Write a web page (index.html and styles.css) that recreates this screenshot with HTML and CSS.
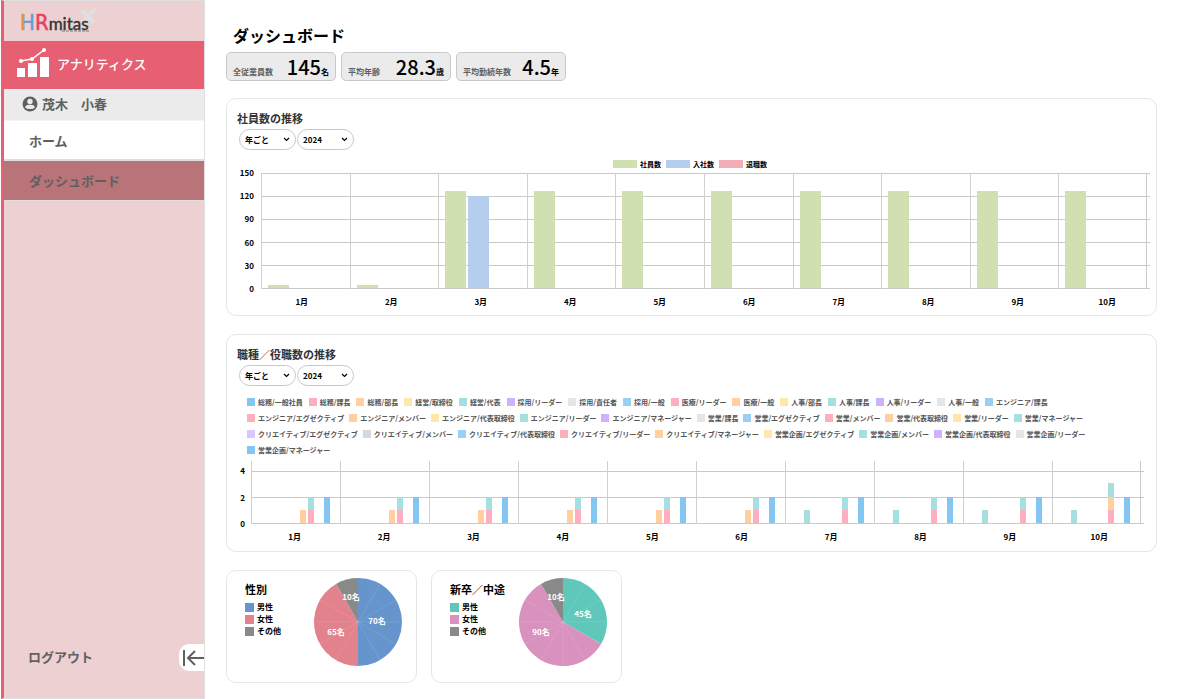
FILE: index.html
```html
<!DOCTYPE html>
<html lang="ja">
<head>
<meta charset="utf-8">
<title>ダッシュボード</title>
<link rel="stylesheet" href="styles.css">
</head>
<body>
<div class="app">
  <aside class="sidebar">
    <div class="brand">
      <svg class="logo" width="80" height="32" viewBox="0 0 80 32" role="img" aria-label="HRmitas">
        <defs>
          <linearGradient id="h-fill" gradientUnits="userSpaceOnUse" x1="0" x2="20" y1="0" y2="0"><stop offset="0.22" stop-color="#f08a2c"/><stop offset="0.22" stop-color="#6a9bd8"/></linearGradient>
        </defs>
        <path d="M62 3l12 13M75 2L62 16" stroke="#dfdfdf" stroke-width="4"/>
        <text x="0" y="23"><tspan class="logo-mark" fill="url(#h-fill)" stroke="url(#h-fill)">H</tspan><tspan class="logo-mark" fill="#e8405c" stroke="#e8405c">R</tspan><tspan class="logo-word">mitas</tspan></text>
        <path d="M42 24h27" stroke="#777" stroke-width="1" stroke-dasharray="3 1"/>
      </svg>
    </div>
    <div class="product">
      <svg width="34" height="30" viewBox="0 0 34 30" fill="#fff" aria-hidden="true">
        <path d="M1 20h8v9H1zM12 15h9v14h-9zM24 9h9v20h-9z"/>
        <path d="M5 13l11-2 12-9" fill="none" stroke="#fff" stroke-width="1.500"/>
        <circle cx="5" cy="13" r="2"/><circle cx="16" cy="11" r="2"/><circle cx="28" cy="2" r="2"/>
      </svg>
      <span>アナリティクス</span>
    </div>
    <div class="user">
      <svg width="16" height="16" viewBox="0 0 16 16" aria-hidden="true">
        <circle cx="8" cy="8" r="7.500" fill="#606060"/>
        <circle cx="8" cy="5.500" r="2.700" fill="#ebebeb"/>
        <path d="M3.200 11.500c0-2 2.500-2.700 4.800-2.700s4.800.7 4.800 2.700q-1 1.500-4.800 1.500t-4.800-1.500z" fill="#ebebeb"/>
      </svg>
      <span>茂木　小春</span>
    </div>
    <nav class="nav">
      <a class="nav-link" href="#">ホーム</a>
      <a class="nav-link nav-link-active" href="#" aria-current="page">ダッシュボード</a>
    </nav>
    <div class="sidebar-foot">
      <a class="logout" href="#">ログアウト</a>
      <button class="collapse" type="button" aria-label="メニューを閉じる">
        <svg width="22" height="18" viewBox="0 0 22 18" fill="none" stroke="#606060" stroke-width="2" aria-hidden="true"><path d="M2 1v16M22 9H6M13 2L6 9l7 7"/></svg>
      </button>
    </div>
  </aside>

  <main class="main">
    <h1 class="title">ダッシュボード</h1>
    <div class="stats">
      <div class="stat"><span>全従業員数</span><span class="stat-value"><b>145</b>名</span></div>
      <div class="stat"><span>平均年齢</span><span class="stat-value"><b>28.3</b>歳</span></div>
      <div class="stat"><span>平均勤続年数</span><span class="stat-value"><b>4.5</b>年</span></div>
    </div>

    <section class="card">
      <h2 class="card-title">社員数の推移</h2>
      <div class="filters">
        <div class="filter"><select aria-label="集計単位"><option>年ごと</option></select><svg class="chevron" width="7" height="5" viewBox="0 0 7 5"><path d="M1 1l2.500 2.500L6 1"/></svg></div>
        <div class="filter"><select aria-label="年"><option>2024</option></select><svg class="chevron" width="7" height="5" viewBox="0 0 7 5"><path d="M1 1l2.500 2.500L6 1"/></svg></div>
      </div>
      <ul class="legend-top">
        <li><i class="swatch-wide green"></i>社員数</li>
        <li><i class="swatch-wide sky"></i>入社数</li>
        <li><i class="swatch-wide rose"></i>退職数</li>
      </ul>
      <div class="chart">
        <div class="axis"><span>150</span><span>120</span><span>90</span><span>60</span><span>30</span><span>0</span></div>
        <div class="plot">
          <div class="month"><i class="bar green" style="--v:4"></i></div>
          <div class="month"><i class="bar green" style="--v:4"></i></div>
          <div class="month"><i class="bar green" style="--v:127"></i><i class="bar sky" style="--v:120"></i></div>
          <div class="month"><i class="bar green" style="--v:127"></i></div>
          <div class="month"><i class="bar green" style="--v:127"></i></div>
          <div class="month"><i class="bar green" style="--v:127"></i></div>
          <div class="month"><i class="bar green" style="--v:127"></i></div>
          <div class="month"><i class="bar green" style="--v:127"></i></div>
          <div class="month"><i class="bar green" style="--v:127"></i></div>
          <div class="month"><i class="bar green" style="--v:127"></i></div>
        </div>
        <div class="months"><span>1月</span><span>2月</span><span>3月</span><span>4月</span><span>5月</span><span>6月</span><span>7月</span><span>8月</span><span>9月</span><span>10月</span></div>
      </div>
    </section>

    <section class="card">
      <h2 class="card-title">職種／役職数の推移</h2>
      <div class="filters">
        <div class="filter"><select aria-label="集計単位"><option>年ごと</option></select><svg class="chevron" width="7" height="5" viewBox="0 0 7 5"><path d="M1 1l2.500 2.500L6 1"/></svg></div>
        <div class="filter"><select aria-label="年"><option>2024</option></select><svg class="chevron" width="7" height="5" viewBox="0 0 7 5"><path d="M1 1l2.500 2.500L6 1"/></svg></div>
      </div>
      <div class="roles">
        <ul class="role-row role-row-loose">
          <li><i class="swatch blue"></i>総務/一般社員</li><li><i class="swatch pink"></i>総務/課長</li><li><i class="swatch orange"></i>総務/部長</li><li><i class="swatch yellow"></i>経営/取締役</li><li><i class="swatch teal"></i>経営/代表</li><li><i class="swatch purple"></i>採用/リーダー</li><li><i class="swatch grey"></i>採用/責任者</li><li><i class="swatch azure"></i>採用/一般</li><li><i class="swatch pink"></i>医療/リーダー</li><li><i class="swatch orange"></i>医療/一般</li><li><i class="swatch yellow"></i>人事/部長</li><li><i class="swatch teal"></i>人事/課長</li><li><i class="swatch purple"></i>人事/リーダー</li><li><i class="swatch grey"></i>人事/一般</li><li><i class="swatch azure"></i>エンジニア/課長</li>
        </ul>
        <ul class="role-row">
          <li><i class="swatch pink"></i>エンジニア/エグゼクティブ</li><li><i class="swatch orange"></i>エンジニア/メンバー</li><li><i class="swatch yellow"></i>エンジニア/代表取締役</li><li><i class="swatch teal"></i>エンジニア/リーダー</li><li><i class="swatch purple"></i>エンジニア/マネージャー</li><li><i class="swatch grey"></i>営業/課長</li><li><i class="swatch azure"></i>営業/エグゼクティブ</li><li><i class="swatch pink"></i>営業/メンバー</li><li><i class="swatch orange"></i>営業/代表取締役</li><li><i class="swatch yellow"></i>営業/リーダー</li><li><i class="swatch teal"></i>営業/マネージャー</li>
        </ul>
        <ul class="role-row">
          <li><i class="swatch lilac"></i>クリエイティブ/エグゼクティブ</li><li><i class="swatch silver"></i>クリエイティブ/メンバー</li><li><i class="swatch azure"></i>クリエイティブ/代表取締役</li><li><i class="swatch pink"></i>クリエイティブ/リーダー</li><li><i class="swatch orange"></i>クリエイティブ/マネージャー</li><li><i class="swatch yellow"></i>営業企画/エグゼクティブ</li><li><i class="swatch teal"></i>営業企画/メンバー</li><li><i class="swatch purple"></i>営業企画/代表取締役</li><li><i class="swatch grey"></i>営業企画/リーダー</li>
        </ul>
        <ul class="role-row">
          <li><i class="swatch blue"></i>営業企画/マネージャー</li>
        </ul>
      </div>
      <div class="chart chart-roles">
        <div class="axis"><span>4</span><span>2</span><span>0</span></div>
        <div class="plot">
          <div class="month"><i class="bar orange" style="--v:1"></i><div class="stack"><i class="bar teal" style="--v:1"></i><i class="bar pink" style="--v:1"></i></div><i class="bar blue" style="--v:2"></i></div>
          <div class="month"><i class="bar orange" style="--v:1"></i><div class="stack"><i class="bar teal" style="--v:1"></i><i class="bar pink" style="--v:1"></i></div><i class="bar blue" style="--v:2"></i></div>
          <div class="month"><i class="bar orange" style="--v:1"></i><div class="stack"><i class="bar teal" style="--v:1"></i><i class="bar pink" style="--v:1"></i></div><i class="bar blue" style="--v:2"></i></div>
          <div class="month"><i class="bar orange" style="--v:1"></i><div class="stack"><i class="bar teal" style="--v:1"></i><i class="bar pink" style="--v:1"></i></div><i class="bar blue" style="--v:2"></i></div>
          <div class="month"><i class="bar orange" style="--v:1"></i><div class="stack"><i class="bar teal" style="--v:1"></i><i class="bar pink" style="--v:1"></i></div><i class="bar blue" style="--v:2"></i></div>
          <div class="month"><i class="bar orange" style="--v:1"></i><div class="stack"><i class="bar teal" style="--v:1"></i><i class="bar pink" style="--v:1"></i></div><i class="bar blue" style="--v:2"></i></div>
          <div class="month"><i class="bar bar-first teal" style="--v:1"></i><div class="stack"><i class="bar teal" style="--v:1"></i><i class="bar pink" style="--v:1"></i></div><i class="bar blue" style="--v:2"></i></div>
          <div class="month"><i class="bar bar-first teal" style="--v:1"></i><div class="stack"><i class="bar teal" style="--v:1"></i><i class="bar pink" style="--v:1"></i></div><i class="bar blue" style="--v:2"></i></div>
          <div class="month"><i class="bar bar-first teal" style="--v:1"></i><div class="stack"><i class="bar teal" style="--v:1"></i><i class="bar pink" style="--v:1"></i></div><i class="bar blue" style="--v:2"></i></div>
          <div class="month"><i class="bar bar-first teal" style="--v:1"></i><div class="stack"><i class="bar teal" style="--v:1.1"></i><i class="bar orange" style="--v:1"></i><i class="bar pink" style="--v:1"></i></div><i class="bar blue" style="--v:2"></i></div>
        </div>
        <div class="months"><span>1月</span><span>2月</span><span>3月</span><span>4月</span><span>5月</span><span>6月</span><span>7月</span><span>8月</span><span>9月</span><span>10月</span></div>
      </div>
    </section>

    <div class="pies">
      <section class="card pie-card">
        <div class="pie-info">
          <h2 class="pie-title">性別</h2>
          <ul class="pie-legend">
            <li><i class="swatch male"></i>男性</li>
            <li><i class="swatch female"></i>女性</li>
            <li><i class="swatch other"></i>その他</li>
          </ul>
        </div>
        <svg class="pie" width="88" height="88" viewBox="-44 -44 88 88" role="img" aria-label="性別の内訳">
          <path d="M0 0V-44A44 44 0 0 1 0 44z" fill="#6695cd"/>
          <path d="M0 0V44A44 44 0 0 1 -22 -38.100z" fill="#e2828c"/>
          <path d="M0 0L-22 -38.100A44 44 0 0 1 0 -44z" fill="#898989"/>
          <path class="spokes" d="M0 0L22 -38M0 0L38 -22M0 0H44M0 0L38 22M0 0L22 38M0 0L-22 38M0 0L-38 22M0 0H-44M0 0L-38 -22"/>
          <text x="-7" y="-22">10名</text><text x="19" y="2">70名</text><text x="-22" y="13">65名</text>
        </svg>
      </section>
      <section class="card pie-card">
        <div class="pie-info">
          <h2 class="pie-title">新卒／中途</h2>
          <ul class="pie-legend">
            <li><i class="swatch fresh"></i>男性</li>
            <li><i class="swatch career"></i>女性</li>
            <li><i class="swatch other"></i>その他</li>
          </ul>
        </div>
        <svg class="pie" width="88" height="88" viewBox="-44 -44 88 88" role="img" aria-label="新卒／中途の内訳">
          <path d="M0 0V-44A44 44 0 0 1 38.100 22z" fill="#60c8bb"/>
          <path d="M0 0L38.100 22A44 44 0 1 1 -22 -38.100z" fill="#d991be"/>
          <path d="M0 0L-22 -38.100A44 44 0 0 1 0 -44z" fill="#898989"/>
          <path class="spokes" d="M0 0L22 -38M0 0L38 -22M0 0H44M0 0L22 38M0 0V44M0 0L-22 38M0 0L-38 22M0 0H-44M0 0L-38 -22"/>
          <text x="-7" y="-22">10名</text><text x="20" y="-5">45名</text><text x="-22" y="13">90名</text>
        </svg>
      </section>
    </div>
  </main>
</div>
</body>
</html>
```

FILE: styles.css
```css
* { box-sizing: border-box; }

body {
  margin: 0;
  background: #fff;
  color: #000;
  font-family: "Noto Sans CJK JP", sans-serif;
}

h1, h2, ul { margin: 0; padding: 0; }
ul { list-style: none; }
svg { display: block; flex: none; }
a { color: inherit; text-decoration: none; }

.app {
  display: grid;
  grid-template-columns: 205px minmax(0, 1fr);
  min-height: 100vh;
}

/* Sidebar */
.sidebar {
  display: flex;
  flex-direction: column;
  margin-left: 1px;
  background: #edd0d2;
  border: 1px solid #e0dede;
  border-left: 3px solid #e65f72;
  color: #606060;
  font-size: 13px;
  font-weight: 700;
}

.brand { height: 40px; padding: 6px 16px 0; }
.logo-mark { font: 400 22px "DejaVu Sans Condensed", "DejaVu Sans", sans-serif; stroke-width: 0.5px; }
.logo-word { font: 400 17px Lato, sans-serif; fill: #333; stroke: #333; stroke-width: 0.4px; }

.product {
  display: flex;
  align-items: center;
  gap: 7px;
  height: 48px;
  padding: 0 12px 4px;
  background: #e65f72;
  color: #fff;
  font-weight: 500;
}

.user {
  display: flex;
  align-items: center;
  gap: 4px;
  height: 32px;
  padding: 0 18px 2px;
  background: #ebebeb;
  border-bottom: 1px solid #f4f4f4;
}

.nav-link {
  display: flex;
  align-items: center;
  height: 40px;
  padding: 0 25px;
  background: #fff;
  border-bottom: 2px solid #e0dede;
}
.nav-link-active { background: #b87479; border-bottom-width: 1px; }

.sidebar-foot {
  display: flex;
  align-items: center;
  justify-content: space-between;
  margin-top: auto;
  padding: 0 0 27px 24px;
}
.logout { padding-bottom: 2px; }

.collapse {
  display: flex;
  align-items: center;
  justify-content: flex-end;
  width: 25px;
  height: 27px;
  padding: 0;
  background: #fff;
  border: 0;
  border-radius: 10px 0 0 10px;
}

/* Page */
.main { padding: 23px 40px 16px 21px; }

.title {
  margin: 0 0 5px 7px;
  font-size: 16px;
  line-height: 24px;
}

.stats { display: flex; gap: 5px; margin-bottom: 17px; }

.stat {
  display: flex;
  align-items: baseline;
  justify-content: space-between;
  width: 110px;
  height: 29px;
  padding: 0 6px;
  background: #ebebeb;
  border: 1px solid #c8c8c8;
  border-radius: 5px;
  color: #606060;
  font-size: 8px;
  font-weight: 700;
  line-height: 28px;
}
.stat-value { color: #000; }
.stat-value b { font-size: 20px; font-weight: 500; }

.card {
  margin-bottom: 18px;
  padding: 11px 6px 7px 10px;
  border: 1px solid #e6e6e6;
  border-radius: 10px;
}

.card-title {
  margin-bottom: 3px;
  color: #333;
  font-size: 11px;
  line-height: 16px;
}

.filters { display: flex; gap: 1px; margin: 0 0 8px 2px; }
.filter { position: relative; }
.filter select {
  display: block;
  width: 57px;
  height: 21px;
  padding: 0 5px;
  appearance: none;
  background: #fff;
  border: 1px solid #c8c8c8;
  border-radius: 11px;
  color: #000;
  font: 700 8px "Noto Sans CJK JP", sans-serif;
}
.chevron {
  position: absolute;
  top: 8px;
  right: 6px;
  fill: none;
  stroke: #000;
  stroke-width: 1.2;
  pointer-events: none;
}

.green { background: #d0e0b0; }
.sky { background: #b6ceed; }
.rose { background: #f3adb6; }
.blue { background: #83c6f4; }
.azure { background: #9ad0f5; }
.pink { background: #ffaebf; }
.orange { background: #ffcf9f; }
.yellow { background: #ffe6aa; }
.teal { background: #a5dfdf; }
.purple { background: #ccb2ff; }
.lilac { background: #d9c7ff; }
.grey { background: #e4e5e7; }
.silver { background: #d6d7dc; }
.male { background: #6695cd; }
.female { background: #e2828c; }
.other { background: #898989; }
.fresh { background: #60c8bb; }
.career { background: #d991be; }

.legend-top {
  display: flex;
  justify-content: center;
  gap: 5px;
  margin-bottom: 3px;
  padding-right: 7px;
  font-size: 7px;
  font-weight: 700;
  line-height: 12px;
}
.legend-top li { display: flex; align-items: center; gap: 3px; }
.swatch-wide { width: 24px; height: 8px; }
.swatch { width: 8px; height: 8px; }

.roles {
  margin: 0 0 3px 10px;
  color: #555;
  font-size: 7px;
  font-weight: 700;
  line-height: 16px;
  white-space: nowrap;
}
.role-row { display: flex; gap: 5px; }
.role-row-loose { gap: 6px; }
.role-row li { display: flex; align-items: center; gap: 3px; }

/* Charts */
.chart {
  display: grid;
  grid-template-columns: 17px minmax(0, 1fr);
  column-gap: 7px;
  row-gap: 7px;
  font-size: 8px;
  font-weight: 700;
  line-height: 12px;
}

.axis {
  display: flex;
  flex-direction: column;
  justify-content: space-between;
  margin: -6px 0;
  text-align: right;
}

.plot {
  display: grid;
  grid-template-columns: repeat(10, minmax(0, 1fr));
  height: 116px;
  padding-right: 3px;
  background: linear-gradient(#c9c9c9 1px, transparent 1px) 0 0 / 100% 23px;
}

.month {
  display: flex;
  align-items: flex-end;
  gap: 2px;
  padding: 0 0 1px 6px;
  border-left: 1px solid #d0d0d0;
}
.month:last-child { border-right: 1px solid #c9c9c9; }

.bar { width: 21px; height: calc(var(--v) * 115px / 150); }

.months {
  display: grid;
  grid-column: 2;
  grid-template-columns: repeat(10, minmax(0, 1fr));
  margin: 0 -2px 0 -4px;
  text-align: center;
}

.chart-roles { grid-template-columns: 8px minmax(0, 1fr); column-gap: 6px; margin: 0 6px 1px 0; }
.chart-roles .axis { margin-top: 4px; }
.chart-roles .plot {
  height: 63px;
  background: linear-gradient(#c9c9c9 1px, transparent 1px) 0 10px / 100% 26px;
}
.chart-roles .month { justify-content: flex-end; padding: 0 10px 1px 18px; }
.chart-roles .bar { width: 6px; height: calc(var(--v) * 13px); }
.chart-roles .bar-first { margin-right: auto; }
.chart-roles .months { margin: 0 0 0 -1px; }
.stack { display: flex; flex-direction: column; margin-right: 8px; }

/* Pie charts */
.pies { display: flex; gap: 14px; }
.pie-card {
  display: flex;
  justify-content: space-between;
  width: 191px;
  height: 113px;
  margin-bottom: 0;
  padding: 7px 14px 0 18px;
}
.pie-info { padding-top: 3px; }
.pie-title { margin-bottom: 4px; font-size: 11px; font-weight: 700; line-height: 16px; }
.pie-legend { font-size: 8px; font-weight: 700; line-height: 12px; }
.pie-legend li { display: flex; align-items: center; gap: 3px; }
.pie-legend .swatch { width: 9px; height: 9px; }
.pie text { fill: #fff; font-size: 8px; font-weight: 700; text-anchor: middle; }
.spokes { fill: none; stroke: #fff; stroke-width: 0.5; opacity: 0.2; }
```
